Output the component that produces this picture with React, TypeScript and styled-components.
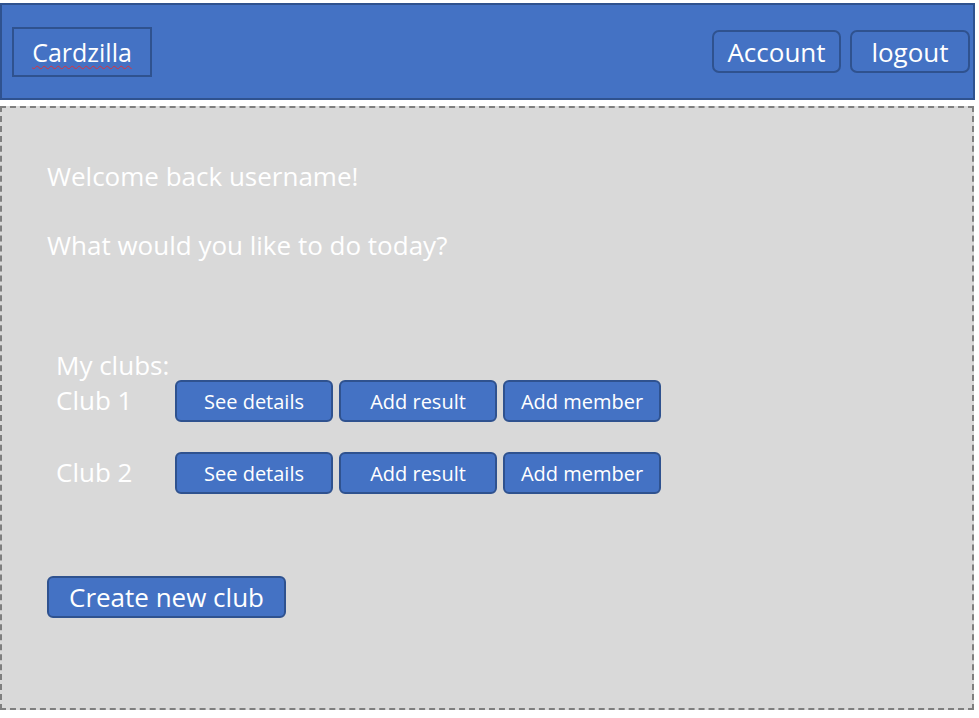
import styled, { createGlobalStyle } from 'styled-components'

const GlobalStyle = createGlobalStyle`
  body {
    margin: 0;
    background: #ffffff;
    font-family: "Open Sans", "Noto Sans", sans-serif;
  }
`

const clubs = ['Club 1', 'Club 2']

const App: React.FC = () => {
  return (
    <Page>
      <GlobalStyle />
      <Header>
        <Logo>
          <LogoText>Cardzilla</LogoText>
        </Logo>
        <Nav>
          <NavButton $width={129}>Account</NavButton>
          <NavButton $width={120}>logout</NavButton>
        </Nav>
      </Header>
      <Main>
        <Line>Welcome back username!</Line>
        <Line $top={37}>What would you like to do today?</Line>
        <Clubs>
          <ClubsTitle>My clubs:</ClubsTitle>
          {clubs.map((club) => (
            <ClubRow key={club}>
              <ClubName>{club}</ClubName>
              <ActionButton>See details</ActionButton>
              <ActionButton>Add result</ActionButton>
              <ActionButton>Add member</ActionButton>
            </ClubRow>
          ))}
        </Clubs>
        <CreateButton>Create new club</CreateButton>
      </Main>
    </Page>
  )
}

export default App

const Page = styled.div`
  padding-top: 3px;
  width: 979px;
  height: 718px;
  box-sizing: border-box;
`

const Header = styled.header`
  display: flex;
  align-items: center;
  justify-content: space-between;
  box-sizing: border-box;
  width: 975px;
  height: 97px;
  padding: 0 3px 0 10px;
  background-color: #4472c4;
  border: 2px solid #2f528f;
`

const Logo = styled.div`
  display: flex;
  align-items: center;
  justify-content: center;
  box-sizing: border-box;
  width: 140px;
  height: 50px;
  border: 2px solid #2f528f;
`

const LogoText = styled.span`
  color: #ffffff;
  font-size: 25px;
  text-decoration: underline wavy #e0303a;
  text-decoration-thickness: 1px;
  text-underline-offset: 3px;
`

const Nav = styled.div`
  display: flex;
  gap: 9px;
`

const NavButton = styled.button<{ $width: number }>`
  box-sizing: border-box;
  width: ${(p) => p.$width}px;
  height: 43px;
  padding: 0;
  background-color: #4472c4;
  border: 2px solid #2f528f;
  border-radius: 7px;
  color: #ffffff;
  font-family: inherit;
  font-size: 26px;
`

const Main = styled.main`
  box-sizing: border-box;
  width: 974px;
  height: 604px;
  margin-top: 6px;
  padding: 52px 0 0 45px;
  background-color: #d9d9d9;
  border: 2px dashed #7f7f7f;
  color: #ffffff;
`

const Line = styled.div<{ $top?: number }>`
  margin-top: ${(p) => p.$top ?? 0}px;
  font-size: 26px;
  line-height: 32px;
`

const Clubs = styled.section`
  margin: 89px 0 0 9px;
  display: flex;
  flex-direction: column;
  gap: 30px;
`

const ClubsTitle = styled.div`
  font-size: 26px;
  line-height: 30px;
  margin-bottom: -30px;
`

const ClubRow = styled.div`
  display: flex;
  align-items: center;
  gap: 6px;
`

const ClubName = styled.div`
  width: 113px;
  font-size: 26px;
  line-height: 32px;
  margin-top: -2px;
`

const ActionButton = styled.button`
  box-sizing: border-box;
  width: 158px;
  height: 42px;
  padding: 0;
  background-color: #4472c4;
  border: 2px solid #2f528f;
  border-radius: 6px;
  color: #ffffff;
  font-family: inherit;
  font-size: 20px;
`

const CreateButton = styled.button`
  display: block;
  box-sizing: border-box;
  width: 239px;
  height: 42px;
  margin-top: 82px;
  padding: 0;
  background-color: #4472c4;
  border: 2px solid #2f528f;
  border-radius: 6px;
  color: #ffffff;
  font-family: inherit;
  font-size: 26px;
`
